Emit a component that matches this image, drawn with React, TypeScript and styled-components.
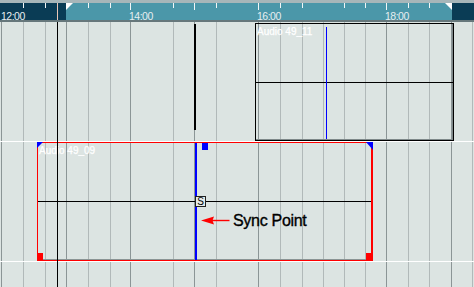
import React from "react";
import styled, { createGlobalStyle, css } from "styled-components";

const BG = "#dce4e2";

const GlobalStyle = createGlobalStyle`
  html, body { margin: 0; padding: 0; background: ${BG}; }
  body { font-family: "Liberation Sans", Arial, sans-serif; overflow: hidden; }
  *, *::before, *::after { box-sizing: border-box; }
`;

const Window = styled.div`
  width: 474px;
  height: 287px;
  display: flex;
  flex-direction: column;
  background: ${BG};
  overflow: hidden;
`;

/* ---------- Ruler ---------- */

const Ruler = styled.div`
  position: relative;
  flex: none;
  height: 22px;
  border-top: 3px solid #a7b6b9;
  border-bottom: 2px solid #66777b;
  display: grid;
  grid-template-columns: 66px 1fr 22px;
`;

const RulerSegment = styled.div<{ $active?: boolean }>`
  background: ${(p) => (p.$active ? "#4b97a9" : "#0a3c55")};
`;

const RulerMarks = styled.div`
  position: absolute;
  inset: 0;
`;

const Tick = styled.div<{ $x: number; $major?: boolean }>`
  position: absolute;
  top: 0;
  left: ${(p) => p.$x}px;
  width: 1px;
  height: ${(p) => (p.$major ? 7 : 5)}px;
  background: #f2f7f8;
`;

const TimeLabel = styled.span<{ $x: number }>`
  position: absolute;
  top: 8px;
  left: ${(p) => p.$x}px;
  font-size: 10.5px;
  line-height: 10px;
  letter-spacing: -0.5px;
  color: #e6eef0;
  white-space: nowrap;
`;

const LocatorFlag = styled.div<{ $side: "left" | "right"; $x: number }>`
  position: absolute;
  top: 0;
  left: ${(p) => p.$x}px;
  width: 7px;
  height: 7px;
  background: #ffffff;
  clip-path: ${(p) =>
    p.$side === "left"
      ? "polygon(0 0, 100% 0, 0 100%)"
      : "polygon(0 0, 100% 0, 100% 100%)"};
`;

const RulerCursor = styled.div<{ $x: number }>`
  position: absolute;
  top: 0;
  bottom: 0;
  left: ${(p) => p.$x}px;
  width: 1px;
  background: #e9c6b6;
`;

/* ---------- Tracks ---------- */

const TrackArea = styled.div`
  position: relative;
  flex: 1;
  display: flex;
  flex-direction: column;
`;

const GridLayer = styled.div`
  position: absolute;
  inset: 0;
  pointer-events: none;
`;

const GridLine = styled.div<{ $x: number; $bar?: boolean }>`
  position: absolute;
  top: 0;
  bottom: 0;
  left: ${(p) => p.$x}px;
  width: 1px;
  background: ${(p) => (p.$bar ? "#8b9596" : "#b1b9b9")};
`;

const Track = styled.div<{ $fill?: boolean }>`
  position: relative;
  ${(p) =>
    p.$fill
      ? css`
          flex: 1;
        `
      : css`
          flex: none;
          height: 120px;
          border-bottom: 1px solid #ffffff;
        `}
`;

const AudioEvent = styled.div<{
  $x: number;
  $y: number;
  $w: number;
  $h: number;
  $selected?: boolean;
}>`
  position: absolute;
  left: ${(p) => p.$x}px;
  top: ${(p) => p.$y}px;
  width: ${(p) => p.$w}px;
  height: ${(p) => p.$h}px;
  display: flex;
  align-items: center;
  ${(p) =>
    p.$selected
      ? css`
          border: 1px solid #ff0000;
          border-right-width: 2px;
          box-shadow: inset 0 -1px 0 #8a9494;
        `
      : css`
          border: 1px solid #000000;
          box-shadow: inset -1px -1px 0 #7e8889;
        `}
`;

const Midline = styled.div`
  flex: 1;
  height: 1px;
  background: #000000;
`;

const EventLabel = styled.span`
  position: absolute;
  top: 2px;
  left: 1px;
  font-size: 10px;
  line-height: 12px;
  color: #ffffff;
  -webkit-text-stroke: 0.25px #ffffff;
  white-space: nowrap;
`;

const SyncLine = styled.div<{ $x: number; $w: number; $top: number; $bottom: number }>`
  position: absolute;
  left: ${(p) => p.$x}px;
  top: ${(p) => p.$top}px;
  bottom: ${(p) => p.$bottom}px;
  width: ${(p) => p.$w}px;
  background: #0000ff;
`;

const SyncHandle = styled.div<{ $x: number }>`
  position: absolute;
  left: ${(p) => p.$x}px;
  top: 0;
  width: 6px;
  height: 7px;
  background: #0000ff;
`;

const SyncBadge = styled.div<{ $x: number; $y: number }>`
  position: absolute;
  left: ${(p) => p.$x}px;
  top: ${(p) => p.$y}px;
  width: 11px;
  height: 11px;
  border: 1px solid #202020;
  background: #e4eae8;
  display: flex;
  align-items: center;
  justify-content: center;
  font-size: 10px;
  line-height: 9px;
  color: #000000;
`;

type Corner = "tl" | "tr" | "bl" | "br";

const CornerHandle = styled.div<{ $corner: Corner }>`
  position: absolute;
  ${(p) => {
    switch (p.$corner) {
      case "tl":
        return css`
          top: -1px;
          left: -1px;
          width: 6px;
          height: 6px;
          background: #0000ff;
          clip-path: polygon(0 0, 100% 0, 0 100%);
        `;
      case "tr":
        return css`
          top: -1px;
          right: -2px;
          width: 7px;
          height: 8px;
          background: #0000ff;
          clip-path: polygon(0 0, 100% 0, 100% 100%);
        `;
      case "bl":
        return css`
          bottom: -1px;
          left: -1px;
          width: 6px;
          height: 8px;
          background: #ff0000;
        `;
      default:
        return css`
          bottom: -1px;
          right: -2px;
          width: 7px;
          height: 8px;
          background: #ff0000;
        `;
    }
  }}
`;

const Annotation = styled.div<{ $x: number; $y: number }>`
  position: absolute;
  left: ${(p) => p.$x}px;
  top: ${(p) => p.$y}px;
  display: flex;
  align-items: center;
  gap: 3px;
`;

const AnnotationText = styled.span`
  font-size: 16px;
  line-height: 18px;
  letter-spacing: -0.3px;
  color: #000000;
  -webkit-text-stroke: 0.35px #000000;
  white-space: nowrap;
`;

const MarkerLine = styled.div<{ $x: number }>`
  position: absolute;
  left: ${(p) => p.$x}px;
  top: 2px;
  width: 2px;
  height: 106px;
  background: #000000;
`;

const SongCursor = styled.div<{ $x: number }>`
  position: absolute;
  top: 0;
  bottom: 0;
  left: ${(p) => p.$x}px;
  width: 1px;
  background: #000000;
  z-index: 5;
`;

/* ---------- Data ---------- */

const gridLines: { x: number; bar?: boolean }[] = [
  { x: 1, bar: true },
  { x: 23 },
  { x: 45 },
  { x: 66, bar: true },
  { x: 88 },
  { x: 110 },
  { x: 130, bar: true },
  { x: 173 },
  { x: 194, bar: true },
  { x: 216 },
  { x: 258, bar: true },
  { x: 280 },
  { x: 302 },
  { x: 323 },
  { x: 344 },
  { x: 365 },
  { x: 386, bar: true },
  { x: 408 },
  { x: 429 },
  { x: 451, bar: true },
  { x: 472 },
];

const ticks: { x: number; major?: boolean }[] = [
  { x: 23 },
  { x: 45 },
  { x: 88 },
  { x: 110 },
  { x: 130, major: true },
  { x: 173 },
  { x: 194, major: true },
  { x: 216 },
  { x: 258, major: true },
  { x: 280 },
  { x: 302 },
  { x: 344 },
  { x: 365 },
  { x: 386, major: true },
  { x: 408 },
  { x: 429 },
];

const labels = [
  { x: 1, text: "12:00" },
  { x: 129, text: "14:00" },
  { x: 257, text: "16:00" },
  { x: 385, text: "18:00" },
];

const ArrowLeft = () => (
  <svg width="29" height="10" viewBox="0 0 29 10">
    <line x1="10" y1="4.5" x2="28.5" y2="4.5" stroke="#ff0000" strokeWidth="1.4" />
    <polygon points="0,4.5 13,0.4 11.5,4.5 13,8.6" fill="#ff0000" />
  </svg>
);

export default function App() {
  return (
    <>
      <GlobalStyle />
      <Window>
        <Ruler>
          <RulerSegment />
          <RulerSegment $active />
          <RulerSegment />
          <RulerMarks>
            {ticks.map((t) => (
              <Tick key={t.x} $x={t.x} $major={t.major} />
            ))}
            {labels.map((l) => (
              <TimeLabel key={l.text} $x={l.x}>
                {l.text}
              </TimeLabel>
            ))}
            <LocatorFlag $side="left" $x={66} />
            <LocatorFlag $side="right" $x={445} />
            <RulerCursor $x={57} />
          </RulerMarks>
        </Ruler>

        <TrackArea>
          <GridLayer>
            {gridLines.map((g) => (
              <GridLine key={g.x} $x={g.x} $bar={g.bar} />
            ))}
          </GridLayer>

          <Track>
            <MarkerLine $x={194} />
            <AudioEvent $x={255} $y={1} $w={199} $h={118}>
              <Midline />
              <EventLabel>Audio 49_11</EventLabel>
              <SyncLine $x={70} $w={1} $top={3} $bottom={1} />
            </AudioEvent>
          </Track>

          <Track>
            <AudioEvent $x={37} $y={0} $w={336} $h={119} $selected>
              <Midline />
              <EventLabel>Audio 49_09</EventLabel>
              <SyncLine $x={157} $w={2} $top={0} $bottom={0} />
              <SyncHandle $x={164} />
              <SyncBadge $x={157} $y={53}>
                S
              </SyncBadge>
              <Annotation $x={163} $y={69}>
                <ArrowLeft />
                <AnnotationText>Sync Point</AnnotationText>
              </Annotation>
              <CornerHandle $corner="tl" />
              <CornerHandle $corner="tr" />
              <CornerHandle $corner="bl" />
              <CornerHandle $corner="br" />
            </AudioEvent>
          </Track>

          <Track $fill />

          <SongCursor $x={57} />
        </TrackArea>
      </Window>
    </>
  );
}
